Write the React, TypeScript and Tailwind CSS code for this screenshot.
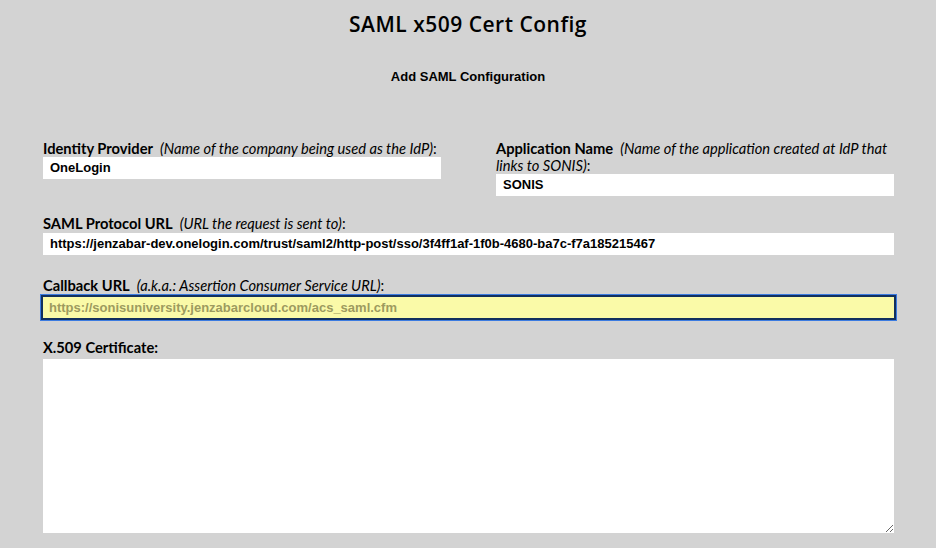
import { useState } from "react";

const labelFont = { fontFamily: "Lato, 'Noto Sans', sans-serif" };

type FieldLabelProps = {
  title: string;
  hint?: string;
};

function FieldLabel({ title, hint }: FieldLabelProps) {
  return (
    <label className="block text-[14.7px] leading-[17px] text-black" style={labelFont}>
      <span className="font-bold">{title}</span>
      {hint && <span className="ml-[7px] italic">({hint})</span>}:
    </label>
  );
}

export default function App() {
  const [idp, setIdp] = useState("OneLogin");
  const [appName, setAppName] = useState("SONIS");
  const [protocolUrl, setProtocolUrl] = useState(
    "https://jenzabar-dev.onelogin.com/trust/saml2/http-post/sso/3f4ff1af-1f0b-4680-ba7c-f7a185215467"
  );
  const [cert, setCert] = useState("");

  const inputClass =
    "block h-[22px] w-full border-0 bg-white px-[7px] text-[13px] font-bold text-black outline-none";

  return (
    <main
      className="min-h-[548px] bg-[#d3d3d3] pb-4"
      style={{ fontFamily: "'Liberation Sans', Arial, sans-serif" }}
    >
      <h1
        className="pt-[10px] text-center text-[21px] font-semibold leading-[28px] tracking-[0.5px] text-black"
        style={{ fontFamily: "'Open Sans', sans-serif" }}
      >
        SAML x509 Cert Config
      </h1>

      <h2 className="mt-[29px] text-center text-[13px] font-bold text-black">
        Add SAML Configuration
      </h2>

      <form className="ml-[43px] mt-[53px] w-[851px]">
        <div className="grid grid-cols-2 gap-x-[55px]">
          <div>
            <FieldLabel
              title="Identity Provider"
              hint="Name of the company being used as the IdP"
            />
            <input
              className={inputClass}
              style={{ fontFamily: "'Liberation Sans', Arial, sans-serif" }}
              value={idp}
              onChange={(e) => setIdp(e.target.value)}
            />
          </div>
          <div>
            <FieldLabel
              title="Application Name"
              hint="Name of the application created at IdP that links to SONIS"
            />
            <input
              className={inputClass}
              style={{ fontFamily: "'Liberation Sans', Arial, sans-serif" }}
              value={appName}
              onChange={(e) => setAppName(e.target.value)}
            />
          </div>
        </div>

        <div className="mt-[19px]">
          <FieldLabel title="SAML Protocol URL" hint="URL the request is sent to" />
          <input
            className={`${inputClass} mt-[1px]`}
            style={{ fontFamily: "'Liberation Sans', Arial, sans-serif" }}
            value={protocolUrl}
            onChange={(e) => setProtocolUrl(e.target.value)}
          />
        </div>

        <div className="mt-[22px]">
          <FieldLabel
            title="Callback URL"
            hint="a.k.a.: Assertion Consumer Service URL"
          />
          <input
            readOnly
            className="-ml-[2px] mt-[1px] block h-[25px] w-[855px] border-2 border-[#12305e] bg-[#fafaa8] px-[6px] text-[13px] font-bold text-[#9d9b5f] outline outline-1 outline-[#3b7be0]"
            style={{ fontFamily: "'Liberation Sans', Arial, sans-serif" }}
            value="https://sonisuniversity.jenzabarcloud.com/acs_saml.cfm"
          />
        </div>

        <div className="mt-[19px]">
          <label className="block text-[14.7px] font-bold leading-[17px] text-black" style={labelFont}>
            X.509 Certificate:
          </label>
          <textarea
            className="mt-[3px] block h-[174px] w-full resize-y border-0 bg-white p-2 text-[13px] outline-none"
            value={cert}
            onChange={(e) => setCert(e.target.value)}
          />
        </div>
      </form>
    </main>
  );
}
